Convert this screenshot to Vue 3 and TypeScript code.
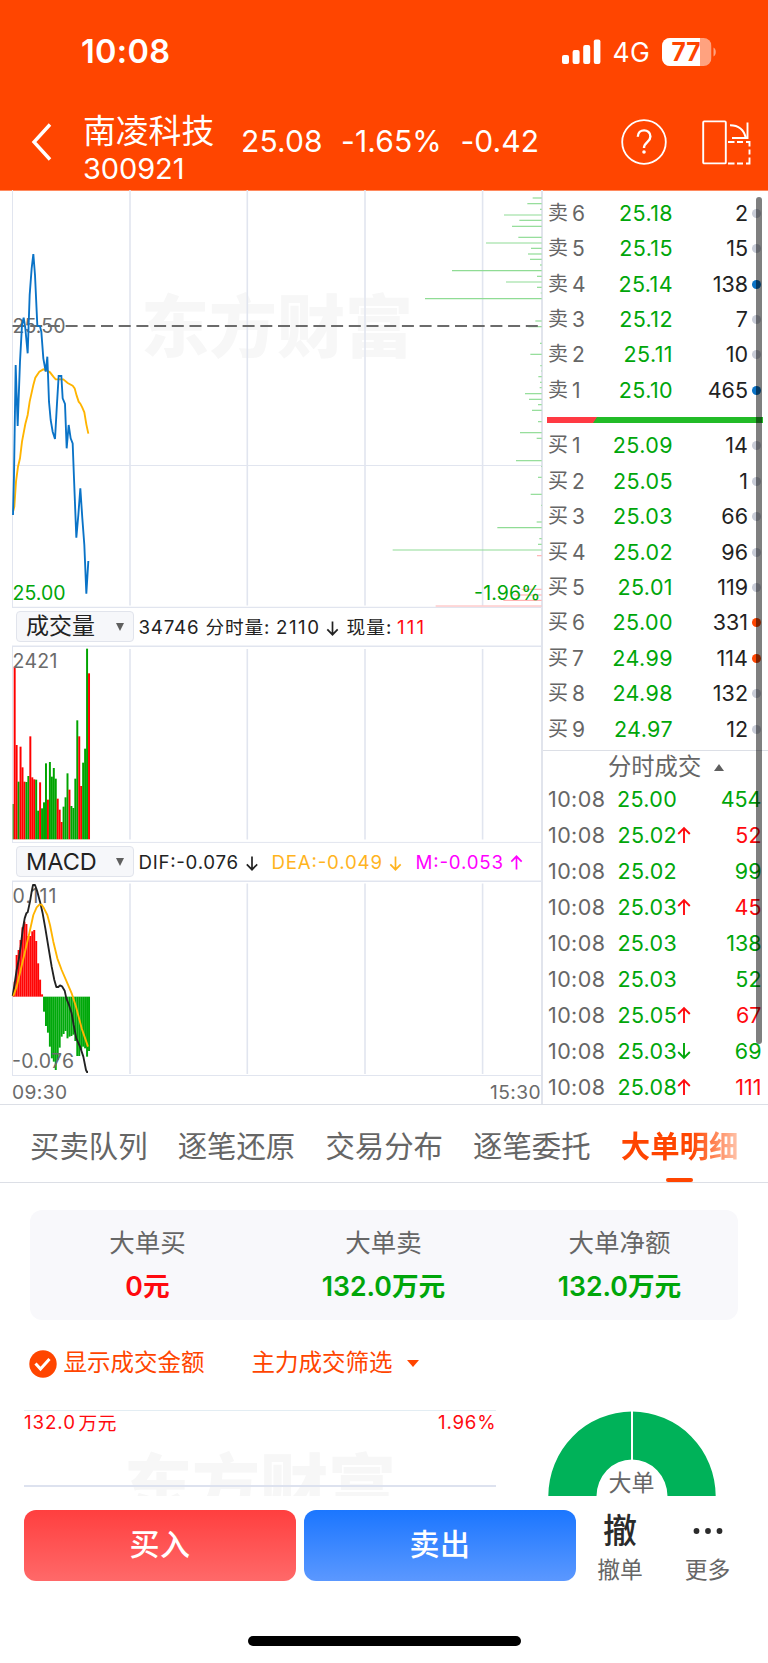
<script setup lang="ts">
interface Level { name: string; price: string; qty: number; dot: 'grey' | 'blue' | 'red' }
interface Trade { price: string; dir: '' | '↑' | '↓'; qty: number; up: boolean }

const asks: Level[] = [
  { name: '卖6', price: '25.18', qty: 2, dot: 'grey' },
  { name: '卖5', price: '25.15', qty: 15, dot: 'grey' },
  { name: '卖4', price: '25.14', qty: 138, dot: 'blue' },
  { name: '卖3', price: '25.12', qty: 7, dot: 'grey' },
  { name: '卖2', price: '25.11', qty: 10, dot: 'grey' },
  { name: '卖1', price: '25.10', qty: 465, dot: 'blue' },
]
const bids: Level[] = [
  { name: '买1', price: '25.09', qty: 14, dot: 'grey' },
  { name: '买2', price: '25.05', qty: 1, dot: 'grey' },
  { name: '买3', price: '25.03', qty: 66, dot: 'grey' },
  { name: '买4', price: '25.02', qty: 96, dot: 'grey' },
  { name: '买5', price: '25.01', qty: 119, dot: 'grey' },
  { name: '买6', price: '25.00', qty: 331, dot: 'red' },
  { name: '买7', price: '24.99', qty: 114, dot: 'red' },
  { name: '买8', price: '24.98', qty: 132, dot: 'grey' },
  { name: '买9', price: '24.97', qty: 12, dot: 'grey' },
]
const trades: Trade[] = [
  { price: '25.00', dir: '', qty: 454, up: false },
  { price: '25.02', dir: '↑', qty: 52, up: true },
  { price: '25.02', dir: '', qty: 99, up: false },
  { price: '25.03', dir: '↑', qty: 45, up: true },
  { price: '25.03', dir: '', qty: 138, up: false },
  { price: '25.03', dir: '', qty: 52, up: false },
  { price: '25.05', dir: '↑', qty: 67, up: true },
  { price: '25.03', dir: '↓', qty: 69, up: false },
  { price: '25.08', dir: '↑', qty: 111, up: true },
]

// Chart series are stored in thirds of a pixel, relative to each pane.
const gridX = [130, 247.3, 365, 482.6]
const priceLine = '39,990 42,870 47,540 53,723 60,530 66,420 71,398 76,430 83,505 89,330 95,250 100,207 105,270 112,422 120,424 124,440 130,520 137,560 142,515 147,650 152,705 158,740 165,762 171,655 176,573 184,573 188,640 195,657 200,790 206,720 212,760 218,775 222,880 229,1058 235,990 241,910 247,1000 253,1080 259,1226 265,1128'
const avgLine = '39,980 43,965 48,890 54,845 60,820 66,770 76,717 83,690 89,650 100,600 106,578 118,560 130,553 140,556 150,562 160,575 167,583 190,583 203,594 218,602 224,610 230,632 236,650 241,656 247,668 253,682 259,718 265,746'
const depth: [number, number][] = [
  [39, 488], [56, 472], [73, 510], [90, 402], [106, 448], [124, 426], [157, 445], [174, 348], [190, 483], [207, 474],
  [223, 480], [240, 510], [257, 246], [274, 501], [291, 408], [307, 501], [324, 512], [341, 165], [408, 496], [425, 475],
  [475, 510], [508, 481], [542, 511], [558, 513], [575, 505], [592, 510], [608, 509], [626, 465], [643, 477], [659, 504],
  [676, 486], [710, 504], [743, 450], [760, 500], [827, 438], [844, 513], [877, 504], [928, 482], [961, 513], [1011, 500],
  [1028, 382], [1061, 508], [1078, 504], [1095, 68],
]
const depthRed: [number, number][] = [[1112, 501], [1213, 455], [1230, 430], [1246, 400], [1263, 197]]

const volumes = 'g492 r80 r315 g425 r320 r382 r425 g426 g408 r289 r412 r418 g419 g512 r427 g505 g487 g370 r479 g366 g410 g384 g416 r476 r509 r546 g500 g472 g400 r449 g498 g504 g416 g241 r289 r438 g368 g326 g26 r100'
  .split(' ')
  .map((s, i) => ({ up: s[0] === 'r', top: Number(s.slice(1)), x: i === 0 ? 38 : 35.2 + 5.87 * i, w: i === 0 ? 3.2 : 5.9 }))

const macd = [372, 335, 255, 240, 210, 172, 155, 162, 198, 198, 184, 180, 213, 280, 329, 373, 425, 468, 488, 530, 565, 575, 600, 570, 533, 500, 492, 483, 505, 500, 498, 494, 513, 558, 558, 540, 530, 535, 560, 543]
  .map((y, i) => ({ y, up: i < 16, x: i === 0 ? 38 : 35.2 + 5.87 * i, w: i === 0 ? 3.2 : 5.9 }))
const difLine = '38,378 44,340 50,300 56,270 62,230 68,180 74,145 79,130 83,127 90,95 95,65 99,45 105,45 112,65 120,95 128,130 136,175 145,230 155,290 163,330 169,351 175,351 180,346 186,349 194,362 199,385 207,405 215,430 221,465 229,505 240,530 250,560 258,600 261,606 264,606'
const deaLine = '40,378 50,350 62,300 75,245 88,190 100,135 110,112 118,104 125,104 132,115 142,135 150,165 160,215 172,265 185,300 200,335 215,370 228,410 245,475 264,530'

const tabs = ['买卖队列', '逐笔还原', '交易分布', '逐笔委托', '大单明细']
const totals = [
  { label: '大单买', value: '0元', up: true },
  { label: '大单卖', value: '132.0万元', up: false },
  { label: '大单净额', value: '132.0万元', up: false },
]
</script>

<template>
  <div class="screen">
    <header class="top">
      <div class="status">
        <span class="clock">10:08</span>
        <svg class="signal" width="39" height="25" viewBox="0 0 39 25" fill="#fff">
          <rect x="0" y="16" width="7" height="9" rx="2" />
          <rect x="10.6" y="11" width="7" height="14" rx="2" />
          <rect x="21.2" y="6" width="7" height="19" rx="2" />
          <rect x="31.8" y="0.5" width="6.6" height="24.5" rx="2" />
        </svg>
        <span class="net">4G</span>
        <svg class="battery" width="56" height="28" viewBox="0 0 56 28">
          <defs><clipPath id="cell"><rect width="49.5" height="28" rx="8" /></clipPath></defs>
          <g clip-path="url(#cell)">
            <rect width="49.5" height="28" fill="#ffa27f" />
            <rect width="38" height="28" fill="#fff" />
          </g>
          <path d="M51.5 9.5c3 1 3 8 0 9z" fill="#ffa27f" />
          <text x="9.5" y="22.8" class="pct" textLength="29" lengthAdjust="spacingAndGlyphs">77</text>
        </svg>
      </div>
      <div class="titlebar">
        <svg class="back" width="22" height="40" viewBox="0 0 22 40"><path d="M19 2.5 3 20l16 17.5" fill="none" stroke="#fff" stroke-width="3.4" /></svg>
        <div class="stock"><div class="name">南凌科技</div><div class="code">300921</div></div>
        <div class="quote"><span>25.08</span><span>-1.65%</span><span>-0.42</span></div>
        <svg class="help" width="46" height="46" viewBox="0 0 46 46" fill="none" stroke="#fff">
          <circle cx="23" cy="23" r="21.8" stroke-width="1.8" />
          <path d="M16.8 17.8c0-8.6 12.6-8.4 12.6-.4 0 5.8-6.4 5.6-6.4 11.6" stroke-width="2.4" />
          <circle cx="23" cy="33" r="1.8" fill="#fff" stroke="none" />
        </svg>
        <svg class="rotate" width="49" height="45" viewBox="0 0 49 45" fill="none" stroke="#fff" stroke-width="1.9">
          <rect x="1.2" y="1.4" width="22.6" height="42" rx="1" />
          <path d="M28 5.2c9 0 14 4.5 15.800 12.8M45.5 2.5v15.5H30" />
          <path d="M26 22h6.5M35 22h6M44 22h3.5v4.5M47.5 29.5v5M47.5 37.5v6H44M41 43.5h-6M32.5 43.5H26" />
        </svg>
      </div>
    </header>

    <section class="market">
      <div class="charts">
        <svg class="pane" width="543" height="418" viewBox="0 190 543 418">
          <text x="141" y="352" class="mark" textLength="272">东方财富</text>
          <g stroke="#e1e5ef" stroke-width="1.6">
            <path d="M12.5 190V607.5" stroke-width="1" />
            <path v-for="x in gridX" :key="x" :d="`M${x} 190V605.5`" />
            <path d="M12 465.5H542M12 607.4H542" stroke-width="1.2" />
          </g>
          <g transform="translate(370 185) scale(.33333)" stroke-width="3.6">
            <path v-for="[y, x] in depth" :key="y" :d="`M${x} ${y}H515`" stroke="#90dc95" />
            <path v-for="[y, x] in depthRed" :key="y" :d="`M${x} ${y}H515`" stroke="#ffb3b3" />
          </g>
          <path d="M12 326H539" stroke="#6b6b6b" stroke-width="2" stroke-dasharray="12 5.7" stroke-dashoffset="-.5" />
          <text x="12.5" y="332.7" class="num" textLength="53">25.50</text>
          <g transform="translate(0 185) scale(.33333)" fill="none" stroke-width="5.6">
            <polyline :points="avgLine" stroke="#ffb400" />
            <polyline :points="priceLine" stroke="#0a73c7" />
          </g>
          <text x="12.5" y="600.3" class="num green" textLength="53">25.00</text>
          <text x="474" y="600.3" class="num green" textLength="66.5">-1.96%</text>
        </svg>

        <div class="tool">
          <button class="pick"><span class="cn">成交量</span><i></i></button>
          <svg class="legend" width="400" height="37" viewBox="139 608 400 37">
            <text x="138.5" y="634.4" class="leg" textLength="60">34746</text>
            <text x="205.5" y="634.4" class="leg" textLength="64">分时量:</text>
            <text x="276" y="634.4" class="leg" textLength="43">2110</text>
            <path d="M332.5 621.5v13M327.3 629.3l5.2 5.4 5.2-5.4" class="arr" stroke="#222" />
            <text x="346.5" y="634.4" class="leg" textLength="45">现量:</text>
            <text x="397" y="634.4" class="leg red" textLength="27">111</text>
          </svg>
        </div>

        <svg class="pane" width="543" height="198" viewBox="0 645 543 198">
          <g stroke="#e1e5ef" stroke-width="1.6">
            <path d="M12 646.3H542" />
            <path d="M12.5 646V842" stroke-width="1" />
            <path v-for="x in gridX" :key="x" :d="`M${x} 649V839.5`" />
            <path d="M12 842.4H542" stroke-width="1" />
          </g>
          <g transform="translate(0 640) scale(.33333)">
            <rect v-for="(b, i) in volumes" :key="i" :x="b.x" :y="b.top" :width="b.w" :height="598 - b.top" :fill="b.up ? '#f00' : '#00a400'" />
          </g>
          <text x="12.5" y="668" class="num" textLength="45">2421</text>
        </svg>

        <div class="tool">
          <button class="pick"><span>MACD</span><i></i></button>
          <svg class="legend" width="400" height="37" viewBox="139 843 400 37">
            <text x="138.5" y="869" class="leg" textLength="99.5">DIF:-0.076</text>
            <path d="M252 856.5v13M246.8 864.3l5.2 5.4 5.2-5.4" class="arr" stroke="#222" />
            <text x="271.5" y="869" class="leg amber" textLength="110.5">DEA:-0.049</text>
            <path d="M395.5 856.5v13M390.3 864.3l5.2 5.4 5.2-5.4" class="arr" stroke="#ffb41e" />
            <text x="415.5" y="869" class="leg pink" textLength="87.5">M:-0.053</text>
            <path d="M516.5 869.5v-13M511.3 861.7l5.2-5.4 5.2 5.4" class="arr" stroke="#f0f" />
          </svg>
        </div>

        <svg class="pane" width="543" height="197" viewBox="0 880 543 197">
          <g stroke="#e1e5ef" stroke-width="1.6">
            <path d="M12 881.2H542" />
            <path d="M12.5 881V1075" stroke-width="1" />
            <path v-for="x in gridX" :key="x" :d="`M${x} 883.5V1074`" />
            <path d="M12 1075.5H542" stroke-width="1" />
          </g>
          <text x="12.5" y="902.7" class="num" textLength="44">0.111</text>
          <g transform="translate(0 870) scale(.33333)" fill="none">
            <rect
              v-for="(b, i) in macd" :key="i" :x="b.x" :y="Math.min(b.y, 380)" :width="b.w"
              :height="Math.abs(b.y - 380)" :fill="b.up ? '#ff0505' : '#00a80a'"
            />
          </g>
          <text x="12" y="1068" class="num" textLength="62">-0.076</text>
          <g transform="translate(0 870) scale(.33333)" fill="none" stroke-width="5.6" stroke-linejoin="round">
            <polyline :points="difLine" stroke="#222" />
            <polyline :points="deaLine" stroke="#ffb400" />
          </g>
        </svg>
        <div class="axis"><span>09:30</span><span>15:30</span></div>
      </div>

      <aside class="book">
        <div class="levels">
          <div v-for="l in asks" :key="l.name" class="level">
            <span class="side">{{ l.name[0] }}<b>{{ l.name[1] }}</b></span><span class="price">{{ l.price }}</span><span class="qty">{{ l.qty }}</span><i :class="l.dot"></i>
          </div>
        </div>
        <svg class="ratio" width="216" height="6" viewBox="0 0 216 6">
          <rect width="216" height="6" fill="#22bb27" /><path d="M0 0H50L46 6H0z" fill="#ff3a43" />
        </svg>
        <div class="levels">
          <div v-for="l in bids" :key="l.name" class="level">
            <span class="side">{{ l.name[0] }}<b>{{ l.name[1] }}</b></span><span class="price">{{ l.price }}</span><span class="qty">{{ l.qty }}</span><i :class="l.dot"></i>
          </div>
        </div>
        <div class="ticks-title"><span>分时成交</span><i></i></div>
        <div v-for="(t, i) in trades" :key="i" class="trade">
          <span class="time">10:08</span>
          <span class="tprice">{{ t.price }}</span>
          <svg class="dir" width="14" height="18" viewBox="0 0 14 18" fill="none" stroke-width="1.9">
            <path v-if="t.dir === '↑'" d="M7 17V2M1.2 8 7 2l5.8 6" stroke="#ff0a0f" />
            <path v-if="t.dir === '↓'" d="M7 1v15M1.2 10 7 16l5.8-6" stroke="#00a60a" />
          </svg>
          <span class="tqty" :class="{ up: t.up }">{{ t.qty }}</span>
        </div>
        <div class="scrollbar"></div>
      </aside>
    </section>

    <nav class="tabs">
      <div v-for="(t, i) in tabs" :key="t" class="tab" :class="{ on: i === 4 }"><span>{{ t }}</span></div>
    </nav>

    <section class="totals">
      <div v-for="t in totals" :key="t.label" class="total">
        <div class="tl">{{ t.label }}</div>
        <div class="tv" :class="{ up: t.up }">{{ t.value }}</div>
      </div>
    </section>

    <div class="filters">
      <svg width="28" height="28" viewBox="0 0 28 28"><circle cx="14" cy="14" r="13.7" fill="#ff4500" /><path d="m6.5 13.5 5 5.5 9-10" fill="none" stroke="#fff" stroke-width="3" /></svg>
      <span class="f1">显示成交金额</span>
      <span class="f2">主力成交筛选</span>
      <i></i>
    </div>

    <section class="detail">
      <svg width="768" height="104" viewBox="0 1392 768 104">
        <text x="124" y="1511" class="mark" textLength="272">东方财富</text>
        <path d="M24 1410.5H496" stroke="#e3edf3" stroke-width="1" />
        <path d="M24 1486H496" stroke="#dde2ef" stroke-width="1.8" />
        <text x="24" y="1429" class="leg red" textLength="51">132.0</text>
        <text x="78.5" y="1429.5" class="leg red" textLength="38">万元</text>
        <text x="438" y="1429" class="leg red" textLength="57.5">1.96%</text>
        <path d="M548.3 1496.5a83.7 85 0 0 1 167.4 0H667.5a35.5 37 0 0 0-71 0z" fill="#00b259" />
        <path d="M632 1408V1462" stroke="#fff" stroke-width="2" />
        <text x="608.5" y="1491" class="donut" textLength="46">大单</text>
      </svg>
    </section>

    <footer class="actions">
      <button class="buy">买入</button>
      <button class="sell">卖出</button>
      <div class="act"><div class="glyph">撤</div><span>撤单</span></div>
      <div class="act more">
        <div class="glyph"><svg width="30" height="8" viewBox="0 0 30 8" fill="#2b2b2b"><circle cx="3.5" cy="4" r="2.9" /><circle cx="15" cy="4" r="2.9" /><circle cx="26.5" cy="4" r="2.9" /></svg></div>
        <span>更多</span>
      </div>
    </footer>
    <div class="home"></div>
  </div>
</template>

<style>
body { margin: 0; background: #fff; }
</style>

<style scoped>
.screen {
  width: 768px; height: 1663px; overflow: hidden; background: #fff; color: #222;
  font-family: Inter, "Noto Sans CJK SC", sans-serif; box-sizing: border-box;
}
svg { display: block; flex: none; }
button { border: 0; padding: 0; font: inherit; color: inherit; box-sizing: border-box; }
.top { height: 190px; background: #ff4500; color: #fff; border-bottom: .6px solid #ff8a5f; box-sizing: content-box; margin-bottom: -.6px; }
.status { height: 103px; display: flex; align-items: center; padding-left: 81px; box-sizing: border-box; }
.clock { font-size: 32.5px; font-weight: 600; width: 480.5px; letter-spacing: .3px; }
.net { font-size: 26.5px; margin-left: 12px; width: 49px; letter-spacing: .3px; }
.pct { font-size: 25px; font-weight: 700; fill: #ff4500; }
.titlebar { display: flex; height: 87px; align-items: center; padding-left: 31px; }
.back { margin-top: -9px; }
.stock { margin-left: 30px; width: 158px; }
.name { font-size: 32.8px; line-height: 38px; margin-top: 6px; font-weight: 400; white-space: nowrap; }
.code { font-size: 29px; line-height: 36px; margin-top: 1px; letter-spacing: -.1px; }
.quote { display: flex; width: 380px; gap: 18.5px; font-size: 30px; margin-top: -11px; letter-spacing: .1px; }
.help { margin-top: -9px; }
.rotate { margin: -9px 0 0 35px; }

.market { display: flex; height: 914px; border-bottom: 1.5px solid #dcdfe6; box-sizing: content-box; }
.charts { width: 541px; border-right: 2px solid #e1e4ec; }
.mark { font: 900 68px "Noto Sans CJK SC", sans-serif; fill: #f7f7f7; }
.num { font-size: 19.5px; fill: #6b6b6b; }
.leg { font-size: 18.7px; fill: #222; }
.green { fill: #00a60a; }
.red { fill: #ff0a0f; }
.amber { fill: #ffb41e; }
.pink { fill: #f0f; }
.arr { fill: none; stroke-width: 1.7; }
.pane { margin-right: -2px; width: 543px; }
.tool { height: 37px; display: flex; align-items: center; padding-left: 16px; box-sizing: border-box; }
.pick {
  width: 118px; height: 31px; margin-right: 5px; display: flex; align-items: center; padding: 0 9.5px 0 9px;
  border: 1.5px solid #e1e4ec; border-radius: 4px; background: #f6f7fa; font-size: 23.5px; line-height: 28px; justify-content: space-between;
}
.pick .cn { font-size: 23px; margin-top: -2px; }
.pick i { border: 4.7px solid transparent; border-top: 8px solid #5f5f5f; border-bottom: 0; }
.axis { height: 27px; display: flex; justify-content: space-between; align-items: center; padding: 2px 0 0 12px; font-size: 19.2px; letter-spacing: .4px; color: #6b6b6b; box-sizing: border-box; }

.book { position: relative; width: 225px; font-size: 21.5px; padding-top: 5px; box-sizing: border-box; }
.level { height: 35.45px; display: grid; grid-template-columns: 45px 80px 75px 13px; align-items: center; padding-left: 5px; line-height: 35px; }
.side { font-size: 20px; color: #666; display: flex; }
.side b { font-weight: 400; font-size: 21px; margin-left: 4px; }
.price { text-align: right; color: #00a60a; letter-spacing: .4px; }
.qty { text-align: right; }
.level i { width: 9px; height: 9px; border-radius: 50%; background: #c9cdd8; margin-left: 3.5px; }
.level i.blue { background: #0a73c7; }
.level i.red { background: #ff4500; }
.ratio { margin: 8.5px 0 5.5px 4px; }
.ticks-title { height: 31px; margin-top: 3.5px; border-top: 1.5px solid #dcdfe6; display: flex; align-items: center; padding-left: 65px; font-size: 23.3px; line-height: 28px; color: #666; padding-bottom: 2px; margin-bottom: -3px; }
.ticks-title i { margin: 1px 0 0 13px; border: 5px solid transparent; border-bottom: 7px solid #5f5f5f; border-top: 0; }
.trade { height: 36px; display: grid; grid-template-columns: 57px 72px 14px 70.5px; align-items: center; padding-left: 5px; line-height: 36px; }
.time { color: #666; letter-spacing: .4px; }
.tprice { text-align: right; color: #00a60a; letter-spacing: .3px; }
.tqty { text-align: right; color: #00a60a; }
.tqty.up { color: #ff0a0f; }
.scrollbar { position: absolute; left: 213px; top: 7px; width: 6px; height: 847px; border-radius: 3px; background: rgba(0, 0, 0, .5); }

.tabs { height: 77px; display: flex; gap: 31.7px; padding-left: 30px; border-bottom: 1.5px solid #dcdfe6; font-size: 29.4px; color: #666; }
.tab { width: 116px; white-space: nowrap; display: flex; align-items: center; position: relative; }
.tab.on { font-weight: 600; }
.tab.on span { background: linear-gradient(90deg, #ff4500 60%, #ffc4ab); background-clip: text; color: transparent; }
.tab.on::after { content: ""; position: absolute; left: 45px; bottom: 0; width: 27px; height: 4px; border-radius: 2px; background: #ff4500; }
.totals { margin: 27px 30px 0; height: 110px; border-radius: 12px; background: #f8f8fb; display: flex; padding-top: 14px; box-sizing: border-box; }
.total { flex: 1; text-align: center; margin-left: -1px; }
.tl { font-size: 25.5px; line-height: 38px; color: #666; }
.tv { font-size: 26.7px; line-height: 40px; margin-top: 4px; font-weight: 600; color: #00a60a; white-space: nowrap; }
.tv.up { color: #ff0a0f; }
.filters { height: 28px; margin-top: 29.5px; display: flex; align-items: center; padding-left: 29px; color: #ff4500; font-size: 23.5px; line-height: 26px; }
.filters span { margin-top: -2px; }
.f1 { margin-left: 6.5px; width: 188px; }
.filters i { margin-left: 14px; border: 6px solid transparent; border-top: 7px solid #ff4500; border-bottom: 0; }
.detail { margin-top: 14.5px; }
.donut { font-size: 23px; fill: #666; }
.actions { margin-top: 14px; height: 71px; display: flex; padding-left: 24px; }
.buy, .sell { width: 272px; height: 71px; border-radius: 12px; color: #fff; font-size: 30px; line-height: 40px; font-weight: 500; letter-spacing: .6px; margin-right: 8px; padding-bottom: 4px; }
.buy { background: linear-gradient(#ff3f3f, #ff6969); }
.sell { background: linear-gradient(#1b76ff, #5b98ff); }
.act { width: 72px; text-align: center; font-size: 22.8px; line-height: 30px; color: #666; }
.act .glyph { height: 41px; display: flex; align-items: center; justify-content: center; font-size: 34px; font-weight: 500; color: #2b2b2b; }
.act span { display: block; margin-top: 4px; }
.act.more { margin-left: 15.5px; }
.home { width: 273px; height: 10px; border-radius: 5px; background: #000; margin: 55px 0 0 247.5px; }
</style>
